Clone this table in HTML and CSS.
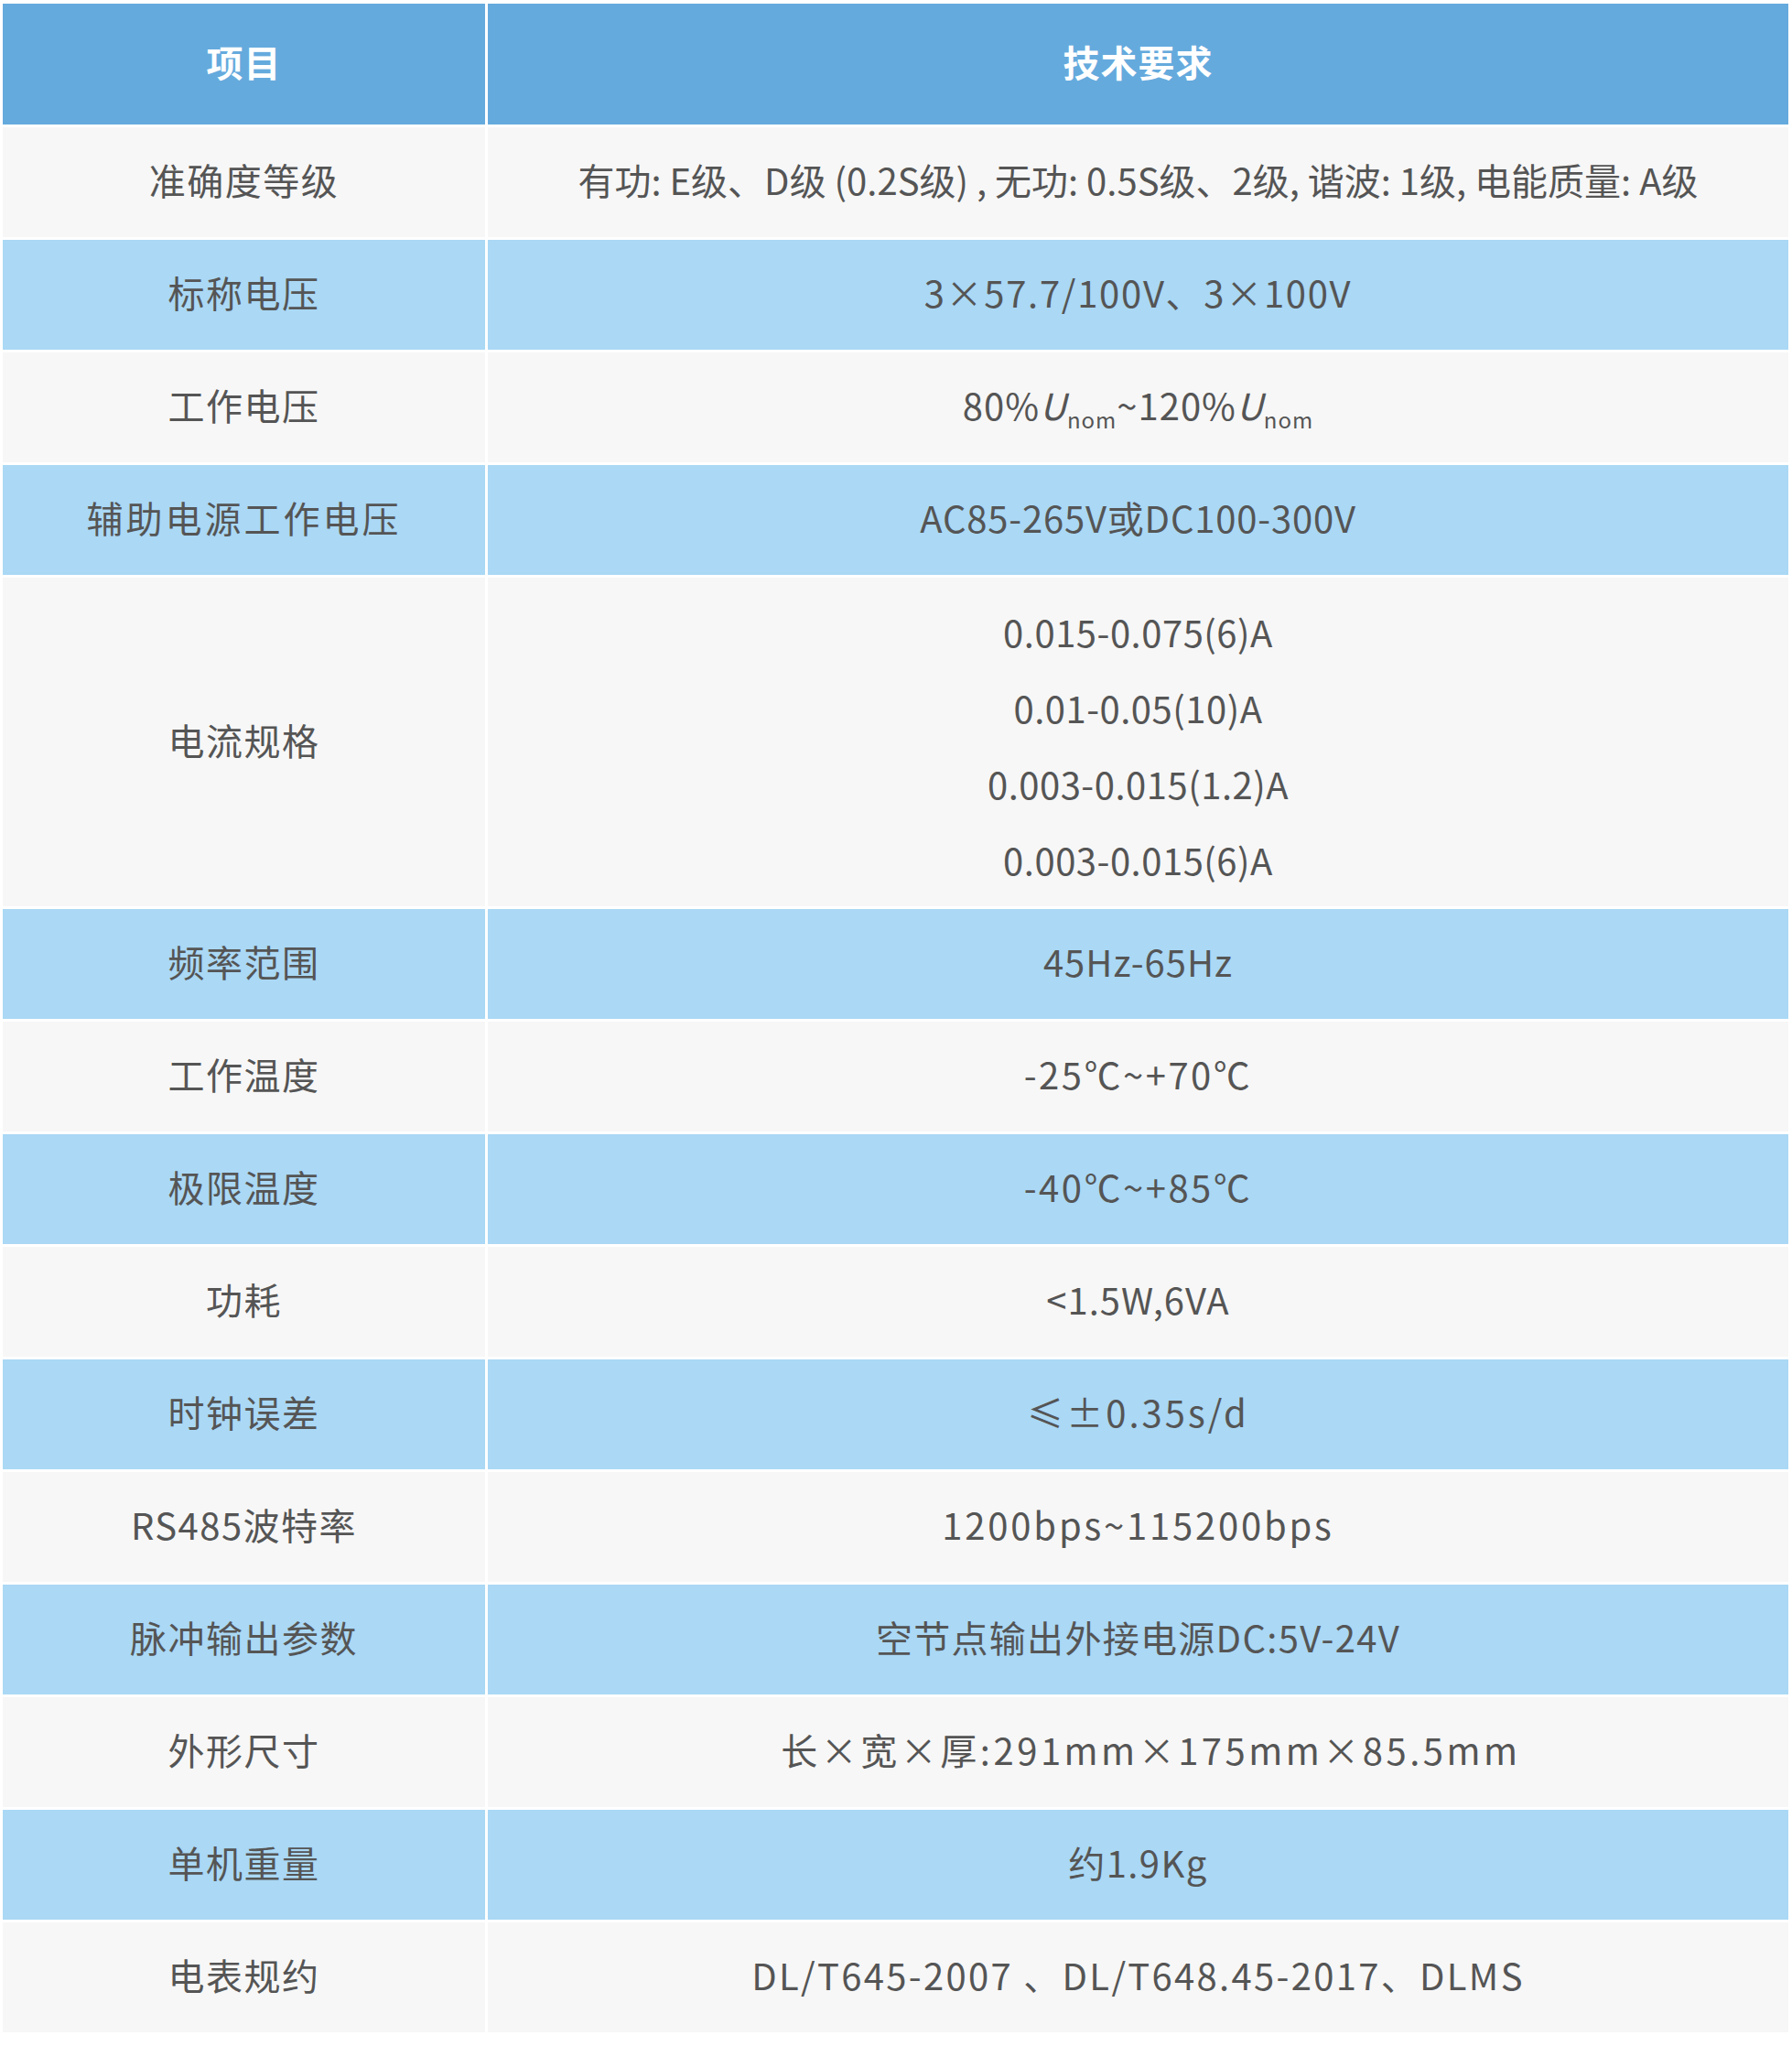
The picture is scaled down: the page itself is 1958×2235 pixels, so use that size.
FILE: index.html
```html
<!DOCTYPE html>
<html lang="zh-CN">
<head>
<meta charset="utf-8">
<title>技术参数</title>
<link rel="stylesheet" href="styles.css">
</head>
<body>
<table class="spec">
  <colgroup><col class="c1"><col class="c2"></colgroup>
  <thead>
    <tr><th>项目</th><th>技术要求</th></tr>
  </thead>
  <tbody>
    <tr class="lt"><td>准确度等级</td><td>有功: E级、D级 (0.2S级) , 无功: 0.5S级、2级, 谐波: 1级, 电能质量: A级</td></tr>
    <tr class="bl"><td>标称电压</td><td class="ls17">3×57.7/100V、3×100V</td></tr>
    <tr class="lt"><td>工作电压</td><td class="ls10">80%<i>U</i><sub>nom</sub>~120%<i>U</i><sub>nom</sub></td></tr>
    <tr class="bl"><td class="wide">辅助电源工作电压</td><td class="ls08">AC85-265V或DC100-300V</td></tr>
    <tr class="lt tall"><td>电流规格</td><td class="ls05"><div class="lines"><p>0.015-0.075(6)A</p><p>0.01-0.05(10)A</p><p>0.003-0.015(1.2)A</p><p>0.003-0.015(6)A</p></div></td></tr>
    <tr class="bl"><td>频率范围</td><td class="ls10">45Hz-65Hz</td></tr>
    <tr class="lt"><td>工作温度</td><td class="ls25">-25℃~+70℃</td></tr>
    <tr class="bl"><td>极限温度</td><td class="ls25">-40℃~+85℃</td></tr>
    <tr class="lt"><td>功耗</td><td class="ls10">&lt;1.5W,6VA</td></tr>
    <tr class="bl"><td>时钟误差</td><td class="ls30">≤±0.35s/d</td></tr>
    <tr class="lt"><td>RS485波特率</td><td class="ls28">1200bps~115200bps</td></tr>
    <tr class="bl"><td>脉冲输出参数</td><td class="ls13">空节点输出外接电源DC:5V-24V</td></tr>
    <tr class="lt"><td>外形尺寸</td><td class="ls35 shift">长×宽×厚:291mm×175mm×85.5mm</td></tr>
    <tr class="bl"><td>单机重量</td><td class="ls14">约1.9Kg</td></tr>
    <tr class="lt"><td>电表规约</td><td class="ls23">DL/T645-2007 、DL/T648.45-2017、DLMS</td></tr>
  </tbody>
</table>
</body>
</html>
```

FILE: styles.css
```css
html, body {
  margin: 0;
  padding: 0;
  background: #ffffff;
}

body {
  font-family: "Noto Sans CJK SC", "Noto Sans", sans-serif;
  color: #555555;
}

.spec {
  width: 1957px;
  table-layout: fixed;
  border-collapse: separate;
  border-spacing: 3px;
  margin-top: 1px;
  background: #ffffff;
}

.spec .c1 { width: 527px; }
.spec .c2 { width: 1421px; }

.spec th,
.spec td {
  padding: 0 0 6px 0;
  text-align: center;
  vertical-align: middle;
  font-size: 40px;
  line-height: 1.2;
  font-weight: 400;
}

.spec th {
  height: 126px;
  background: #65aadd;
  color: #ffffff;
  font-weight: 700;
  letter-spacing: 1px;
}

.spec td {
  height: 114px;
}

.spec td:first-child {
  letter-spacing: 1.5px;
}

.spec td.wide {
  letter-spacing: 3px;
}

.spec td.shift {
  padding-left: 28px;
}

.spec tr.lt td { background: #f7f7f7; }
.spec tr.bl td { background: #aad8f5; }

.spec tr.tall td { height: 353px; }

.lines p {
  margin: 0;
  line-height: 83px;
}

.lines {
  padding-top: 14px;
}

.ls05 { letter-spacing: 0.5px; }
.ls08 { letter-spacing: 0.8px; }
.ls10 { letter-spacing: 1px; }
.ls13 { letter-spacing: 1.3px; }
.ls14 { letter-spacing: 1.4px; }
.ls17 { letter-spacing: 1.7px; }
.ls23 { letter-spacing: 2.3px; }
.ls25 { letter-spacing: 2.5px; }
.ls28 { letter-spacing: 2.8px; }
.ls30 { letter-spacing: 3px; }
.ls35 { letter-spacing: 3.5px; }

.spec i {
  font-style: italic;
}

.spec sub {
  font-size: 24px;
  vertical-align: -9px;
  line-height: 0;
  letter-spacing: 1px;
}
```
